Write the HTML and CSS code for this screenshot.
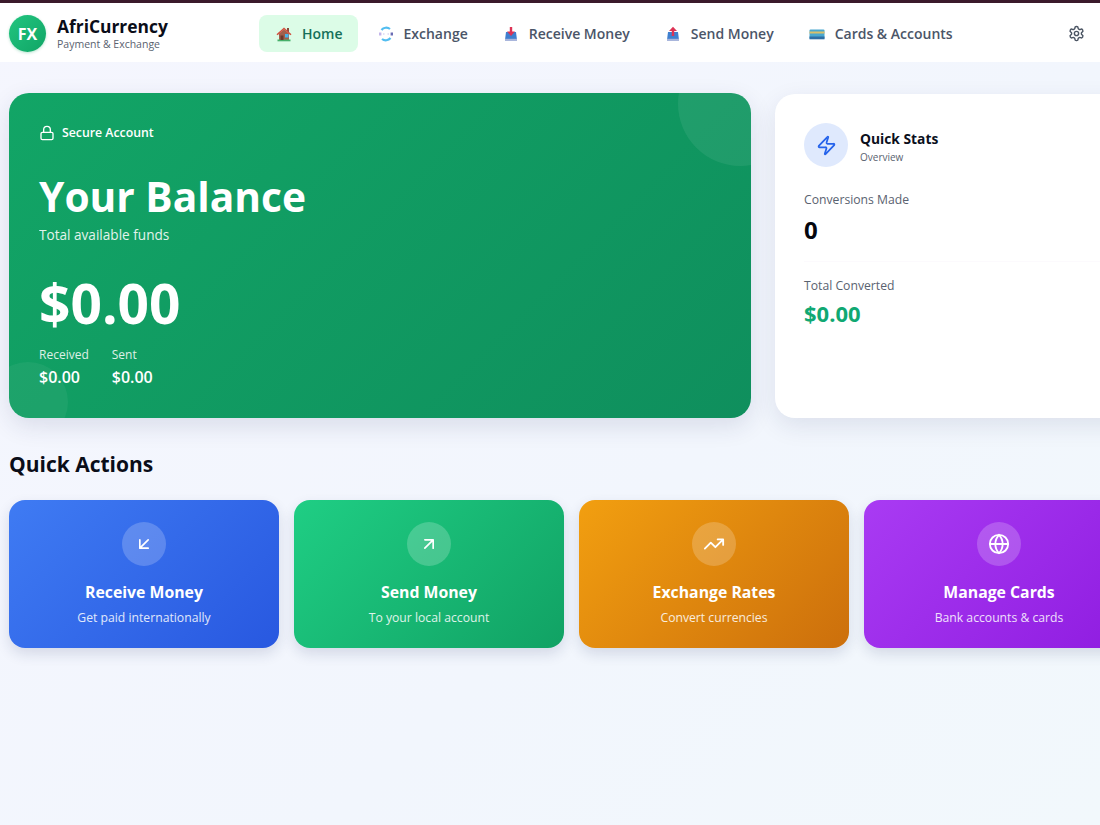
FILE: index.html
```html
<!DOCTYPE html>
<html lang="en">
<head>
<meta charset="utf-8">
<title>AfriCurrency</title>
<link rel="stylesheet" href="styles.css">
</head>
<body>
<div class="topline"></div>
<header class="header">
  <div class="brand">
    <div class="logo">FX</div>
    <div class="brand-text">
      <div class="brand-name">AfriCurrency</div>
      <div class="brand-sub">Payment &amp; Exchange</div>
    </div>
  </div>
  <nav class="nav">
    <a class="nav-item active">
      <svg class="emoji" viewBox="0 0 16 16"><rect x="11" y="2" width="2" height="4" fill="#8a4a3a"/><path d="M3 7.500 8 3.500l5 4V14H3z" fill="#a0604c"/><path d="M.5 8.200 8 1.500l7.500 6.700-1.100 1L8 3.600 1.600 9.200z" fill="#d1503f"/><rect x="1.500" y="13.500" width="13" height="1.800" fill="#46b06a"/><rect x="9" y="8" width="3.500" height="3.500" fill="#45b4ea"/><rect x="4.500" y="9.500" width="3" height="4.500" fill="#6b3a2c"/></svg>
      <span>Home</span>
    </a>
    <a class="nav-item">
      <svg class="emoji" viewBox="0 0 16 16" fill="none"><path d="M3.500 4A6 6 0 0 1 12 3" stroke="#52bdf0" stroke-width="2.200"/><path d="M12.500 12A6 6 0 0 1 4 13" stroke="#52bdf0" stroke-width="2.200"/><path d="M2.200 6.500v3" stroke="#c3b5ea" stroke-width="2.400"/><path d="M13.800 6.500v3" stroke="#6a6cb4" stroke-width="2.400"/><path d="M5 8h1.500M9.500 8H11" stroke="#dcd8f2" stroke-width="1.500"/></svg>
      <span>Exchange</span>
    </a>
    <a class="nav-item">
      <svg class="emoji" viewBox="0 0 16 16"><path d="M3 6h10l1 8H2z" fill="#3f7fcf"/><rect x="2" y="12.800" width="12" height="2.200" fill="#a9b6dc"/><path d="M6.800 1h2.400v4.500H12L8 10 4 5.500h2.800z" fill="#dd3355"/></svg>
      <span>Receive Money</span>
    </a>
    <a class="nav-item">
      <svg class="emoji" viewBox="0 0 16 16"><path d="M3 6h10l1 8H2z" fill="#3f7fcf"/><rect x="2" y="12.800" width="12" height="2.200" fill="#a9b6dc"/><path d="M6.800 10h2.400V5H12L8 .8 4 5h2.800z" fill="#dd3355"/></svg>
      <span>Send Money</span>
    </a>
    <a class="nav-item">
      <svg class="emoji" viewBox="0 0 16 16"><rect x="0.500" y="3.500" width="15" height="9.500" rx="1" fill="#4aa8cf"/><rect x="0.500" y="5.500" width="15" height="2" fill="#d9c06a"/><rect x="0.500" y="10.500" width="15" height="2.800" fill="#2f6fa5"/></svg>
      <span>Cards &amp; Accounts</span>
    </a>
  </nav>
  <svg class="gear" viewBox="0 0 24 24" fill="none" stroke="#4b5563" stroke-width="2" stroke-linecap="round" stroke-linejoin="round"><path d="M12.220 2h-.44a2 2 0 0 0-2 2v.18a2 2 0 0 1-1 1.730l-.43.250a2 2 0 0 1-2 0l-.15-.080a2 2 0 0 0-2.730.730l-.22.380a2 2 0 0 0 .730 2.730l.15.100a2 2 0 0 1 1 1.720v.510a2 2 0 0 1-1 1.740l-.15.090a2 2 0 0 0-.730 2.730l.22.380a2 2 0 0 0 2.730.730l.15-.080a2 2 0 0 1 2 0l.43.250a2 2 0 0 1 1 1.730V20a2 2 0 0 0 2 2h.44a2 2 0 0 0 2-2v-.18a2 2 0 0 1 1-1.730l.43-.250a2 2 0 0 1 2 0l.15.080a2 2 0 0 0 2.730-.730l.22-.390a2 2 0 0 0-.730-2.730l-.15-.080a2 2 0 0 1-1-1.740v-.500a2 2 0 0 1 1-1.740l.15-.090a2 2 0 0 0 .730-2.730l-.22-.380a2 2 0 0 0-2.730-.730l-.15.080a2 2 0 0 1-2 0l-.43-.250a2 2 0 0 1-1-1.730V4a2 2 0 0 0-2-2z"/><circle cx="12" cy="12" r="3"/></svg>
</header>
<main class="main">
  <section class="hero">
    <div class="balance">
      <div class="secure">
        <svg class="lock" viewBox="0 0 24 24" fill="none" stroke="currentColor" stroke-width="2" stroke-linecap="round" stroke-linejoin="round"><rect x="3" y="11" width="18" height="11" rx="2"/><path d="M7 11V7a5 5 0 0 1 10 0v4"/></svg>
        <span>Secure Account</span>
      </div>
      <h1 class="balance-title">Your Balance</h1>
      <div class="balance-sub">Total available funds</div>
      <div class="amount">$0.00</div>
      <div class="flows">
        <div class="flow"><div class="flow-label">Received</div><div class="flow-value">$0.00</div></div>
        <div class="flow"><div class="flow-label">Sent</div><div class="flow-value">$0.00</div></div>
      </div>
    </div>
    <aside class="stats">
      <div class="stats-head">
        <div class="stats-icon">
          <svg viewBox="0 0 24 24" fill="none" stroke="#2563eb" stroke-width="2" stroke-linecap="round" stroke-linejoin="round"><path d="M4 14a1 1 0 0 1-.780-1.630l9.900-10.200a.500.500 0 0 1 .860.460l-1.920 6.020A1 1 0 0 0 13 10h7a1 1 0 0 1 .780 1.630l-9.900 10.200a.500.500 0 0 1-.860-.460l1.920-6.020A1 1 0 0 0 11 14z"/></svg>
        </div>
        <div class="stats-text">
          <div class="stats-title">Quick Stats</div>
          <div class="stats-sub">Overview</div>
        </div>
      </div>
      <div class="stat stat-first">
        <div class="stat-label">Conversions Made</div>
        <div class="stat-value">0</div>
      </div>
      <div class="stat">
        <div class="stat-label">Total Converted</div>
        <div class="stat-value green">$0.00</div>
      </div>
    </aside>
  </section>
  <h2 class="section-title">Quick Actions</h2>
  <section class="actions">
    <div class="action blue">
      <div class="action-icon"><svg viewBox="0 0 24 24"><path d="M17 7 7 17M17 17H7V7"/></svg></div>
      <div class="action-title">Receive Money</div>
      <div class="action-sub">Get paid internationally</div>
    </div>
    <div class="action emerald">
      <div class="action-icon"><svg viewBox="0 0 24 24"><path d="M7 17 17 7M7 7h10v10"/></svg></div>
      <div class="action-title">Send Money</div>
      <div class="action-sub">To your local account</div>
    </div>
    <div class="action orange">
      <div class="action-icon"><svg viewBox="0 0 24 24"><path d="M22 7 13.500 15.500 8.500 10.500 2 17M16 7h6v6"/></svg></div>
      <div class="action-title">Exchange Rates</div>
      <div class="action-sub">Convert currencies</div>
    </div>
    <div class="action purple">
      <div class="action-icon"><svg viewBox="0 0 24 24"><circle cx="12" cy="12" r="10"/><path d="M12 2a14.500 14.500 0 0 0 0 20 14.500 14.500 0 0 0 0-20M2 12h20"/></svg></div>
      <div class="action-title">Manage Cards</div>
      <div class="action-sub">Bank accounts &amp; cards</div>
    </div>
  </section>
</main>
</body>
</html>
```
FILE: styles.css
```css
* { box-sizing: border-box; margin: 0; padding: 0; }
html, body { width: 1100px; height: 825px; overflow: hidden; }
body {
  font-family: "Open Sans", "Noto Sans", sans-serif;
  background: linear-gradient(135deg, #f5f6fe 0%, #f2f6fd 60%, #f2f8fc 100%);
  color: #0b0f1c;
}
.topline { height: 3px; background: #3b1a2b; }
.header {
  height: 59px;
  background: #fff;
  display: flex;
  align-items: center;
  padding: 2px 15px 0 9px;
}
.brand { display: flex; align-items: center; gap: 11px; width: 250px; }
.logo {
  width: 37px; height: 37px; border-radius: 50%;
  background: linear-gradient(135deg, #22c580, #10a565);
  color: #fff; font-weight: 700; font-size: 16px;
  display: flex; align-items: center; justify-content: center;
  box-shadow: 0 1px 3px rgba(16,165,101,.3);
}
.brand-name { font-size: 17.400px; font-weight: 700; line-height: 20px; color: #0a0d18; }
.brand-sub { font-size: 10.500px; line-height: 13px; margin-top: 2px; color: #5a6270; }
.nav { display: flex; align-items: center; gap: 3px; flex: 1; }
.nav-item {
  display: flex; align-items: center; gap: 10px;
  height: 37px; padding: 0 15px 0 17px;
  border-radius: 8px;
  font-size: 14px; font-weight: 600; color: #4b5568;
}
.nav-item.active { background: #dcfce7; color: #15705a; }
.emoji { width: 16px; height: 16px; flex: none; }
.gear { width: 17px; height: 17px; flex: none; }
.main { padding: 31px 0 0 9px; }
.hero { display: flex; gap: 24px; width: 1200px; }
.balance {
  position: relative; overflow: hidden;
  width: 742px; height: 325px;
  border-radius: 20px;
  padding: 30px;
  color: #fff;
  background: linear-gradient(135deg, #12a566 0%, #0f8f5d 100%);
  box-shadow: 0 8px 24px rgba(30,40,90,.12);
}
.balance::before {
  content: ""; position: absolute; top: -52px; right: -52px;
  width: 125px; height: 125px; border-radius: 50%;
  background: rgba(255,255,255,.07);
}
.balance::after {
  content: ""; position: absolute; left: -21px; bottom: -24px;
  width: 80px; height: 80px; border-radius: 50%;
  background: rgba(255,255,255,.05);
}
.secure { display: flex; align-items: center; gap: 7px; font-size: 12.300px; font-weight: 600; line-height: 20px; }
.lock { width: 16px; height: 16px; }
.balance-title { font-size: 40.700px; font-weight: 700; line-height: 54px; margin-top: 26px; }
.balance-sub { font-size: 13.600px; line-height: 18px; opacity: .88; margin-top: 3px; }
.amount { font-size: 55px; font-weight: 700; line-height: 70px; margin-top: 24px; }
.flows { display: flex; gap: 23px; margin-top: 8px; }
.flow-label { font-size: 12px; line-height: 18px; opacity: .85; }
.flow-value { font-size: 16px; font-weight: 600; line-height: 22px; margin-top: 2px; }
.stats {
  width: 420px; height: 324px; margin-top: 1px;
  background: #fff; border-radius: 20px;
  padding: 29px 29px;
  box-shadow: 0 8px 24px rgba(30,40,90,.1);
}
.stats-head { display: flex; align-items: center; gap: 12px; }
.stats-icon {
  width: 44px; height: 44px; border-radius: 50%;
  background: #dfe9fd;
  display: flex; align-items: center; justify-content: center;
}
.stats-icon svg { width: 21px; height: 21px; }
.stats-text { padding-top: 2px; }
.stats-title { font-size: 13.800px; font-weight: 700; line-height: 19px; }
.stats-sub { font-size: 10px; line-height: 14px; margin-top: 2px; color: #5a6270; }
.stat { padding-bottom: 15px; }
.stat-first { margin-top: 24px; border-bottom: 1px solid #fcfafd; margin-bottom: 15px; }
.stat-label { font-size: 12.200px; line-height: 18px; color: #5a6270; }
.stat-value { font-size: 24px; font-weight: 700; line-height: 32px; margin-top: 5px; color: #05070f; }
.stat-value.green { font-size: 22px; color: #10a872; margin-top: 2px; }
.section-title { font-size: 21px; font-weight: 700; line-height: 28px; margin-top: 32px; color: #0a0d18; }
.actions { display: flex; gap: 15px; margin-top: 22px; width: 1200px; }
.action {
  width: 270px; height: 148px; flex: none;
  border-radius: 16px;
  color: #fff;
  display: flex; flex-direction: column; align-items: center;
  padding-top: 22px;
  box-shadow: 0 6px 14px rgba(30,40,90,.14);
}
.blue { background: linear-gradient(135deg, #3f7bf3, #2858e0); }
.emerald { background: linear-gradient(135deg, #1fce84, #11a264); }
.orange { background: linear-gradient(135deg, #f29f10, #cc6f0c); }
.purple { background: linear-gradient(135deg, #a93bf3, #8f1ce0); }
.action-icon {
  width: 44px; height: 44px; border-radius: 50%;
  background: rgba(255,255,255,.2);
  display: flex; align-items: center; justify-content: center;
}
.action-icon svg { width: 20px; height: 20px; fill: none; stroke: #fff; stroke-width: 2; stroke-linecap: round; stroke-linejoin: round; }
.orange .action-icon svg, .purple .action-icon svg { width: 22px; height: 22px; }
.action-title { font-size: 15.800px; font-weight: 700; line-height: 22px; margin-top: 15px; }
.action-sub { font-size: 12.200px; line-height: 17px; opacity: .85; margin-top: 6px; }
```
